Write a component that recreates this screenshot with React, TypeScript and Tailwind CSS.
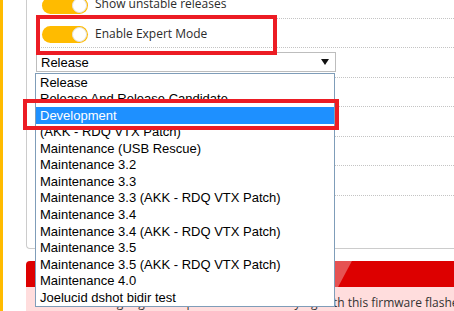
import { Fragment } from 'react'

const options = [
  'Release',
  'Release And Release Candidate',
  'Development',
  '(AKK - RDQ VTX Patch)',
  'Maintenance (USB Rescue)',
  'Maintenance 3.2',
  'Maintenance 3.3',
  'Maintenance 3.3 (AKK - RDQ VTX Patch)',
  'Maintenance 3.4',
  'Maintenance 3.4 (AKK - RDQ VTX Patch)',
  'Maintenance 3.5',
  'Maintenance 3.5 (AKK - RDQ VTX Patch)',
  'Maintenance 4.0',
  'Joelucid dshot bidir test',
]

function Toggle() {
  return (
    <span className="relative mt-[4px] inline-flex h-[17px] w-[46px] shrink-0 items-center justify-end rounded-full bg-[#ffbb00] pr-[1px]">
      <span className="h-[15px] w-[15px] rounded-full border border-[#e2e2e2] bg-white" />
    </span>
  )
}

function Row({ children, line = true }: { children?: React.ReactNode; line?: boolean }) {
  return (
    <div className={`flex h-[29.5px] items-center gap-[7px] ${line ? 'border-b border-dotted border-[#c4c4c4]' : ''}`}>
      {children}
    </div>
  )
}

export default function App() {
  return (
    <div className="relative flex h-[311px] w-[454px] overflow-hidden bg-white font-['Open_Sans',sans-serif] text-[12px] text-[#2b2b2b]">
      <div className="w-[3px] shrink-0 bg-[#ffbb00]" />

      <div className="flex min-w-0 flex-1 flex-col pl-[23px]">
        {/* options panel, scrolled so its top is out of view */}
        <div className="-mt-[11px] h-[260px] shrink-0 rounded-bl-[4px] border-b border-l border-[#cccccc] pl-[10px]">
          <Row>
            <span className="ml-[5px] flex"><Toggle /></span>
            <span className="mt-[2px]">Show unstable releases</span>
          </Row>
          <Row>
            <span className="ml-[5px] flex"><Toggle /></span>
            <span className="mt-[2px]">Enable Expert Mode</span>
          </Row>
          <Row>
            <div className="-ml-[1px] flex h-[20px] w-[300px] items-center justify-between border border-[#bdbdbd] pl-[4px] pr-[6px] font-['Liberation_Sans',Arial,sans-serif] text-[13px] text-black">
              <span>Release</span>
              <svg width="8" height="6" viewBox="0 0 8 6"><path d="M0 0h8L4 6z" fill="#111" /></svg>
            </div>
          </Row>
          {[0, 1, 2, 3].map((i) => (
            <Fragment key={i}>
              <Row>
                <span className="ml-[5px] flex"><Toggle /></span>
                <span className="mt-[2px]">Option</span>
              </Row>
            </Fragment>
          ))}
          <Row line={false} />
        </div>

        {/* warning note */}
        <div className="mt-[12px] flex flex-col">
          <div className="relative h-[26px] overflow-hidden rounded-tl-[4px] bg-[#dd0000]">
            <div className="absolute top-0 left-[270px] h-full w-[49px] skew-x-[-28deg] bg-[#e65252]" />
          </div>
          <div className="h-[40px] overflow-hidden whitespace-nowrap bg-[#ffdddd] pt-[8px] pl-[10px] text-[12px] leading-[16px] text-[#333]">
            {'Notice: You might get unexpected behaviour flying with this firmware flashed on your flight controller.'}
          </div>
        </div>
      </div>

      {/* open dropdown list */}
      <div className="absolute top-[73px] left-[35px] flex h-[234px] w-[300px] flex-col border border-[#7f9db9] bg-white font-['Liberation_Sans',Arial,sans-serif] text-[13px] text-black">
        {options.map((o) => (
          <div
            key={o}
            className={`flex h-[16.57px] items-center pl-[4px] whitespace-nowrap ${o === 'Development' ? 'bg-[#1e90ff] text-white' : ''}`}
          >
            {o}
          </div>
        ))}
      </div>

      {/* annotation boxes */}
      <div className="absolute top-[15px] left-[36px] h-[40px] w-[241px] border-[4px] border-[#ec1c24]" />
      <div className="absolute top-[99px] left-[23px] h-[31px] w-[316px] border-[4px] border-[#ec1c24]" />
    </div>
  )
}
